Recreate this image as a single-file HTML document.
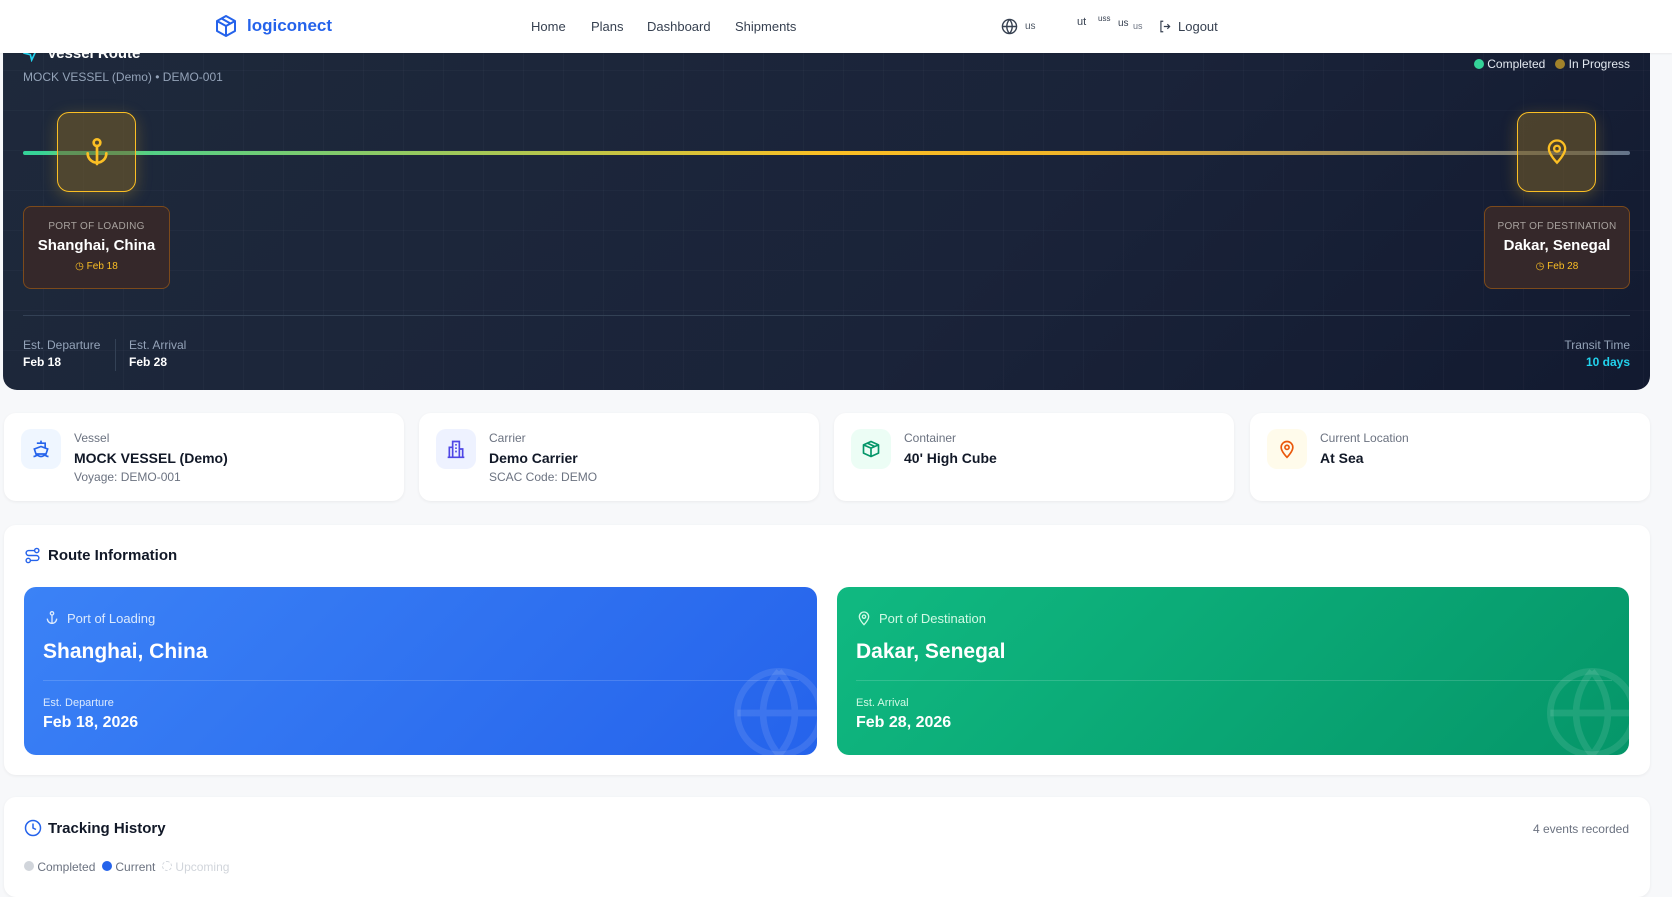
<!DOCTYPE html>
<html><head><meta charset="utf-8"><style>
*{box-sizing:border-box;margin:0;padding:0}
body{width:1672px;height:868px;overflow:hidden;background:#f7f8fa;font-family:"Liberation Sans",sans-serif;position:relative;color:#111827}
.a{position:absolute}
.nav{left:0;top:0;width:1672px;height:53px;background:#fff;box-shadow:0 1px 2px rgba(0,0,0,.06);z-index:5}
.nav .l{font-size:13px;color:#374151;top:19px}
.dark{left:3px;top:30px;width:1647px;height:360px;border-radius:0 0 14px 14px;
background-image:linear-gradient(rgba(255,255,255,.025) 1px,transparent 1px),linear-gradient(90deg,rgba(255,255,255,.025) 1px,transparent 1px),linear-gradient(135deg,#1e293b,#1a2339 60%,#121a30);background-size:40px 40px,40px 40px,100% 100%}
.card{background:#fff;border-radius:12px;box-shadow:0 1px 3px rgba(0,0,0,.06)}
.ib{width:40px;height:40px;border-radius:10px;left:17px;top:16px;display:flex;align-items:center;justify-content:center}
.lab{font-size:12px;color:#6b7280;left:70px;top:18px}
.val{font-size:14px;font-weight:bold;color:#111827;left:70px;top:37px}
.sub{font-size:12px;color:#6b7280;left:70px;top:57px}
</style></head><body>
<div class="a nav">
 <svg class="a" style="left:214px;top:13px" width="24" height="26" viewBox="0 0 24 24" fill="none" stroke="#2563eb" stroke-width="2" stroke-linejoin="round"><path d="M12 2l9 5v10l-9 5-9-5V7z"/><path d="M3 7l9 5 9-5M12 12v10M7.5 4.5l9 5"/></svg>
 <div class="a" style="left:247px;top:16px;font-size:17px;font-weight:bold;color:#2563eb">logiconect</div>
 <div class="a l" style="left:531px">Home</div>
 <div class="a l" style="left:591px">Plans</div>
 <div class="a l" style="left:647px">Dashboard</div>
 <div class="a l" style="left:735px">Shipments</div>
 <svg class="a" style="left:1001px;top:18px" width="17" height="17" viewBox="0 0 24 24" fill="none" stroke="#374151" stroke-width="2"><circle cx="12" cy="12" r="10"/><path d="M2 12h20M12 2a15 15 0 010 20M12 2a15 15 0 000 20"/></svg>
 <div class="a" style="left:1025px;top:21px;font-size:10px;color:#4b5563">us</div>
 <div class="a" style="left:1077px;top:16px;font-size:11px;color:#374151">ut</div>
 <div class="a" style="left:1098px;top:14px;font-size:8px;color:#374151">uss</div>
 <div class="a" style="left:1118px;top:18px;font-size:10px;color:#374151">us</div>
 <div class="a" style="left:1133px;top:21px;font-size:9px;color:#6b7280">us</div>
 <svg class="a" style="left:1158px;top:19px" width="14" height="15" viewBox="0 0 24 24" fill="none" stroke="#374151" stroke-width="2"><path d="M9 3H5v18h4M10 12h10M16 8l4 4-4 4"/></svg>
 <div class="a l" style="left:1178px">Logout</div>
</div>
<div class="a dark">
 <svg class="a" style="left:20px;top:16px" width="16" height="16" viewBox="0 0 24 24" fill="none" stroke="#22d3ee" stroke-width="2.5"><path d="M3 11l19-9-9 19-2-8z"/></svg>
 <div class="a" style="left:44px;top:15px;font-size:15px;font-weight:bold;color:#fff">Vessel Route</div>
 <div class="a" style="left:20px;top:40px;font-size:12px;color:#94a3b8">MOCK VESSEL (Demo) • DEMO-001</div>
 <div class="a" style="right:20px;top:27px;font-size:12px;color:#e2e8f0"><span style="display:inline-block;width:10px;height:10px;border-radius:5px;background:#34d399;vertical-align:-1px"></span> Completed &nbsp;&nbsp;<span style="display:inline-block;width:10px;height:10px;border-radius:5px;background:#a1822a;vertical-align:-1px"></span> In Progress</div>
 <div class="a" style="left:20px;top:121px;width:1607px;height:4px;border-radius:2px;background:linear-gradient(90deg,#34d399,#fbbf24 50%,#f0b429 65%,#64748b)"></div>
 <div class="a" style="left:54px;top:82px;width:79px;height:80px;border-radius:12px;border:1.5px solid #fbbf24;background:rgba(120,95,40,.55);box-shadow:0 4px 16px rgba(251,191,36,.25)"></div>
 <svg class="a" style="left:78px;top:106px" width="32" height="32" viewBox="0 0 24 24" fill="none" stroke="#fbbf24" stroke-width="2" stroke-linecap="round"><circle cx="12" cy="5" r="2.5"/><path d="M12 7.5V21M5 13a7 7 0 0014 0"/></svg>
 <div class="a" style="left:1514px;top:82px;width:79px;height:80px;border-radius:12px;border:1.5px solid #fbbf24;background:rgba(120,95,40,.55);box-shadow:0 4px 16px rgba(251,191,36,.25)"></div>
 <svg class="a" style="left:1540px;top:106px" width="28" height="30" viewBox="0 0 24 24" fill="none" stroke="#fbbf24" stroke-width="2"><path d="M12 22s-7-7-7-12a7 7 0 0114 0c0 5-7 12-7 12z"/><circle cx="12" cy="10" r="2.5"/></svg>
 <div class="a" style="left:20px;top:176px;width:147px;height:83px;border-radius:8px;border:1px solid #7c4a1b;background:#35282a;text-align:center">
  <div style="margin-top:14px;font-size:10px;color:#a8a29e;letter-spacing:.3px">PORT OF LOADING</div>
  <div style="margin-top:5px;font-size:15px;font-weight:bold;color:#fff">Shanghai, China</div>
  <div style="margin-top:7px;font-size:10px;color:#fbbf24">◷ Feb 18</div></div>
 <div class="a" style="left:1481px;top:176px;width:146px;height:83px;border-radius:8px;border:1px solid #7c4a1b;background:#35282a;text-align:center">
  <div style="margin-top:14px;font-size:10px;color:#a8a29e;letter-spacing:.3px">PORT OF DESTINATION</div>
  <div style="margin-top:5px;font-size:15px;font-weight:bold;color:#fff">Dakar, Senegal</div>
  <div style="margin-top:7px;font-size:10px;color:#fbbf24">◷ Feb 28</div></div>
 <div class="a" style="left:20px;top:285px;width:1607px;height:1px;background:#334155"></div>
 <div class="a" style="left:20px;top:308px;font-size:12px;color:#94a3b8">Est. Departure</div>
 <div class="a" style="left:20px;top:325px;font-size:12px;font-weight:bold;color:#fff">Feb 18</div>
 <div class="a" style="left:112px;top:309px;width:1px;height:32px;background:#334155"></div>
 <div class="a" style="left:126px;top:308px;font-size:12px;color:#94a3b8">Est. Arrival</div>
 <div class="a" style="left:126px;top:325px;font-size:12px;font-weight:bold;color:#fff">Feb 28</div>
 <div class="a" style="right:20px;top:308px;font-size:12px;color:#94a3b8;text-align:right">Transit Time</div>
 <div class="a" style="right:20px;top:325px;font-size:12px;font-weight:bold;color:#22d3ee">10 days</div>
</div>

<div class="a card" style="left:4px;top:413px;width:400px;height:88px">
 <div class="a ib" style="background:#eff6ff"><svg width="20" height="20" viewBox="0 0 24 24" fill="none" stroke="#2563eb" stroke-width="2"><path d="M12 2v3M7 5h10v6M4 12l8-3 8 3-2 6H6zM3 21c3 0 3-1.5 4.5-1.5S9 21 12 21s3-1.5 4.5-1.5S18 21 21 21"/></svg></div>
 <div class="a lab">Vessel</div><div class="a val">MOCK VESSEL (Demo)</div><div class="a sub">Voyage: DEMO-001</div></div>
<div class="a card" style="left:419px;top:413px;width:400px;height:88px">
 <div class="a ib" style="background:#eef2ff"><svg width="20" height="20" viewBox="0 0 24 24" fill="none" stroke="#4f46e5" stroke-width="2"><path d="M8 22V3h8v19M4 22V10h4M16 12h4v10M2 22h20M11 7h2M11 11h2M11 15h2"/></svg></div>
 <div class="a lab">Carrier</div><div class="a val">Demo Carrier</div><div class="a sub">SCAC Code: DEMO</div></div>
<div class="a card" style="left:834px;top:413px;width:400px;height:88px">
 <div class="a ib" style="background:#ecfdf5"><svg width="20" height="20" viewBox="0 0 24 24" fill="none" stroke="#059669" stroke-width="2" stroke-linejoin="round"><path d="M12 3l9 4v10l-9 4-9-4V7zM3 7l9 4 9-4M12 11v10M7.5 5l9 4"/></svg></div>
 <div class="a lab">Container</div><div class="a val">40' High Cube</div></div>
<div class="a card" style="left:1250px;top:413px;width:400px;height:88px">
 <div class="a ib" style="background:#fffbeb"><svg width="20" height="20" viewBox="0 0 24 24" fill="none" stroke="#ea580c" stroke-width="2"><path d="M12 22s-7-7-7-12a7 7 0 0114 0c0 5-7 12-7 12z"/><circle cx="12" cy="10" r="2.5"/></svg></div>
 <div class="a lab">Current Location</div><div class="a val">At Sea</div></div>

<div class="a card" style="left:4px;top:525px;width:1646px;height:250px">
 <svg class="a" style="left:20px;top:22px" width="17" height="17" viewBox="0 0 24 24" fill="none" stroke="#2563eb" stroke-width="2"><circle cx="6" cy="19" r="3"/><circle cx="18" cy="5" r="3"/><path d="M9 19h8.5a3.5 3.5 0 000-7h-11a3.5 3.5 0 010-7H15"/></svg>
 <div class="a" style="left:44px;top:22px;font-size:15px;font-weight:bold;color:#111827">Route Information</div>
 <div class="a" style="left:20px;top:62px;width:793px;height:168px;border-radius:12px;overflow:hidden;background:linear-gradient(135deg,#3b82f6,#2563eb)">
  <svg class="a" style="left:20px;top:23px" width="16" height="16" viewBox="0 0 24 24" fill="none" stroke="#dbeafe" stroke-width="2"><circle cx="12" cy="5" r="2.5"/><path d="M12 7.5V21M5 13a7 7 0 0014 0"/></svg>
  <div class="a" style="left:43px;top:24px;font-size:13px;color:#dbeafe">Port of Loading</div>
  <div class="a" style="left:19px;top:53px;font-size:21px;font-weight:bold;color:#fff">Shanghai, China</div>
  <div class="a" style="left:19px;top:93px;width:756px;height:1px;background:rgba(255,255,255,.15)"></div>
  <div class="a" style="left:19px;top:110px;font-size:11px;color:#dbeafe">Est. Departure</div>
  <div class="a" style="left:19px;top:127px;font-size:16px;font-weight:bold;color:#fff">Feb 18, 2026</div>
  <svg class="a" style="left:705px;top:76px" width="100" height="100" viewBox="0 0 24 24" fill="none" stroke="rgba(255,255,255,.1)" stroke-width="1.6"><circle cx="12" cy="12" r="10"/><path d="M2 12h20M12 2a15 15 0 010 20M12 2a15 15 0 000 20"/></svg>
 </div>
 <div class="a" style="left:833px;top:62px;width:792px;height:168px;border-radius:12px;overflow:hidden;background:linear-gradient(135deg,#10b981,#059669)">
  <svg class="a" style="left:19px;top:23px" width="16" height="16" viewBox="0 0 24 24" fill="none" stroke="#d1fae5" stroke-width="2"><path d="M12 22s-7-7-7-12a7 7 0 0114 0c0 5-7 12-7 12z"/><circle cx="12" cy="10" r="2.5"/></svg>
  <div class="a" style="left:42px;top:24px;font-size:13px;color:#d1fae5">Port of Destination</div>
  <div class="a" style="left:19px;top:53px;font-size:21px;font-weight:bold;color:#fff">Dakar, Senegal</div>
  <div class="a" style="left:19px;top:93px;width:756px;height:1px;background:rgba(255,255,255,.15)"></div>
  <div class="a" style="left:19px;top:110px;font-size:11px;color:#d1fae5">Est. Arrival</div>
  <div class="a" style="left:19px;top:127px;font-size:16px;font-weight:bold;color:#fff">Feb 28, 2026</div>
  <svg class="a" style="left:705px;top:76px" width="100" height="100" viewBox="0 0 24 24" fill="none" stroke="rgba(255,255,255,.1)" stroke-width="1.6"><circle cx="12" cy="12" r="10"/><path d="M2 12h20M12 2a15 15 0 010 20M12 2a15 15 0 000 20"/></svg>
 </div>
</div>

<div class="a card" style="left:4px;top:797px;width:1646px;height:100px">
 <svg class="a" style="left:20px;top:22px" width="18" height="18" viewBox="0 0 24 24" fill="none" stroke="#2563eb" stroke-width="2"><circle cx="12" cy="12" r="10"/><path d="M12 6v6l4 2"/></svg>
 <div class="a" style="left:44px;top:23px;font-size:15px;font-weight:bold;color:#111827">Tracking History</div>
 <div class="a" style="right:21px;top:25px;font-size:12px;color:#6b7280">4 events recorded</div>
 <div class="a" style="left:20px;top:63px;font-size:12px;color:#6b7280"><span style="display:inline-block;width:10px;height:10px;border-radius:5px;background:#d1d5db"></span> Completed &nbsp;<span style="display:inline-block;width:10px;height:10px;border-radius:5px;background:#2563eb"></span> Current &nbsp;<span style="display:inline-block;width:10px;height:10px;border-radius:5px;border:1px dashed #d1d5db"></span> <span style="color:#d1d5db">Upcoming</span></div>
</div>
</body></html>
